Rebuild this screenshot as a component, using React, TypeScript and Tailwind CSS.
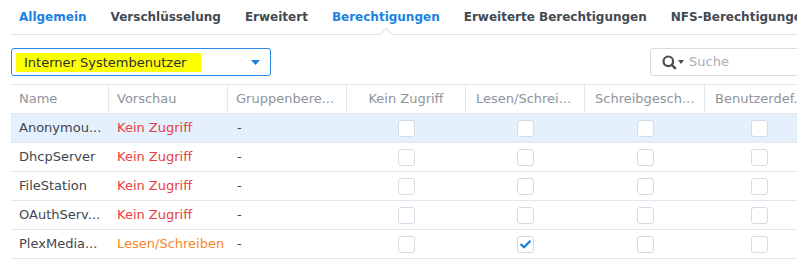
const font = { fontFamily: '"DejaVu Sans", Verdana, sans-serif' };

const tabs = [
  "Allgemein",
  "Verschlüsselung",
  "Erweitert",
  "Berechtigungen",
  "Erweiterte Berechtigungen",
  "NFS-Berechtigungen",
];

const cols = ["w-[98px]", "w-[119px]", "w-[119px]", "w-[119px]", "w-[119px]", "w-[120px]", "w-[108px]"];

const rows = [
  { name: "Anonymou...", preview: "Kein Zugriff", rw: false, active: true },
  { name: "DhcpServer", preview: "Kein Zugriff", rw: false, active: false },
  { name: "FileStation", preview: "Kein Zugriff", rw: false, active: false },
  { name: "OAuthServ...", preview: "Kein Zugriff", rw: false, active: false },
  { name: "PlexMedia...", preview: "Lesen/Schreiben", rw: true, active: false },
];

function Check({ on }: { on?: boolean }) {
  return (
    <div className="flex h-[17px] w-[17px] items-center justify-center rounded-[3px] border border-[#d3dce6] bg-white">
      {on && (
        <svg width="13" height="10" viewBox="0 0 13 10">
          <path d="M1.5 5 L5 8.2 L11.5 1.8" fill="none" stroke="#1a7fe0" strokeWidth="2.2" />
        </svg>
      )}
    </div>
  );
}

export default function App() {
  return (
    <div className="h-[261px] w-[797px] overflow-hidden bg-white pl-[11px] text-[13px]" style={font}>
      <div className="flex h-[35px] items-center gap-[24px] whitespace-nowrap border-b border-[#dbe2ea] pl-2 text-[12px] font-bold">
        {tabs.map((t, i) => (
          <div key={t} className={`relative flex h-full shrink-0 items-center ${i === 0 || i === 3 ? "text-[#1a82e2]" : "text-[#434a52]"}`}>
            {t}
            {i === 3 && (
              <span className="absolute bottom-[-6px] left-1/2 h-[10px] w-[10px] -translate-x-1/2 rotate-45 border-l border-t border-[#dbe2ea] bg-white" />
            )}
          </div>
        ))}
      </div>

      <div className="mt-[13px] flex items-center">
        <div className="flex h-[28px] w-[260px] shrink-0 items-center justify-between rounded-[3px] border border-[#2a8ae3] pl-[4px] pr-[10px]">
          <span className="flex h-[19px] w-[185px] items-center bg-[#fcff00] pl-[8px] pt-[1px] text-[#2f2f2f]">
            Interner Systembenutzer
          </span>
          <svg width="9" height="5" viewBox="0 0 9 5">
            <path d="M0 0 H9 L4.5 5 Z" fill="#1a7fe0" />
          </svg>
        </div>
        <div className="ml-[379px] flex h-[28px] w-[170px] shrink-0 items-center rounded-[3px] border border-[#d6dde5] pl-[11px]">
          <svg width="15" height="15" viewBox="0 0 15 15">
            <circle cx="6.3" cy="6.3" r="4.8" fill="none" stroke="#474d55" strokeWidth="2.2" />
            <path d="M9.8 9.8 L13.8 13.8" stroke="#474d55" strokeWidth="2.4" />
          </svg>
          <svg className="ml-[1px]" width="6" height="4" viewBox="0 0 6 4">
            <path d="M0 0 H6 L3 4 Z" fill="#474d55" />
          </svg>
          <span className="ml-[5px] text-[#a9b0b8]">Suche</span>
        </div>
      </div>

      <div className="mt-[8px] w-[802px]">
        <div className="flex h-[29px] border-t border-[#dde3ea] text-[#8e949c]">
          {["Name", "Vorschau", "Gruppenbere...", "Kein Zugriff", "Lesen/Schrei...", "Schreibgesch...", "Benutzerdef."].map((h, i) => (
            <div
              key={h}
              className={`${cols[i]} flex shrink-0 items-center whitespace-nowrap border-r border-[#e3e8ee] ${
                i === 3 ? "justify-center" : i > 3 ? "pl-[10px]" : "pl-[8px]"
              } ${i === 6 ? "border-r-0" : ""}`}
            >
              {h}
            </div>
          ))}
        </div>
        {rows.map((r) => (
          <div key={r.name} className={`flex h-[29px] border-t border-[#e1e7ee] ${r.active ? "bg-[#e4f0fc]" : "bg-white"}`}>
            <div className={`${cols[0]} flex shrink-0 items-center whitespace-nowrap pl-[8px] text-[#3f464f]`}>{r.name}</div>
            <div className={`${cols[1]} flex shrink-0 items-center whitespace-nowrap pl-[8px] ${r.rw ? "text-[#f5862a]" : "text-[#e7403f]"}`}>
              {r.preview}
            </div>
            <div className={`${cols[2]} flex shrink-0 items-center pl-[9px] text-[#3f464f]`}>-</div>
            {[3, 4, 5, 6].map((c) => (
              <div key={c} className={`${cols[c]} flex shrink-0 items-center justify-center`}>
                <Check on={r.rw && c === 4} />
              </div>
            ))}
          </div>
        ))}
        <div className="border-t border-[#e1e7ee]" />
      </div>
    </div>
  );
}
